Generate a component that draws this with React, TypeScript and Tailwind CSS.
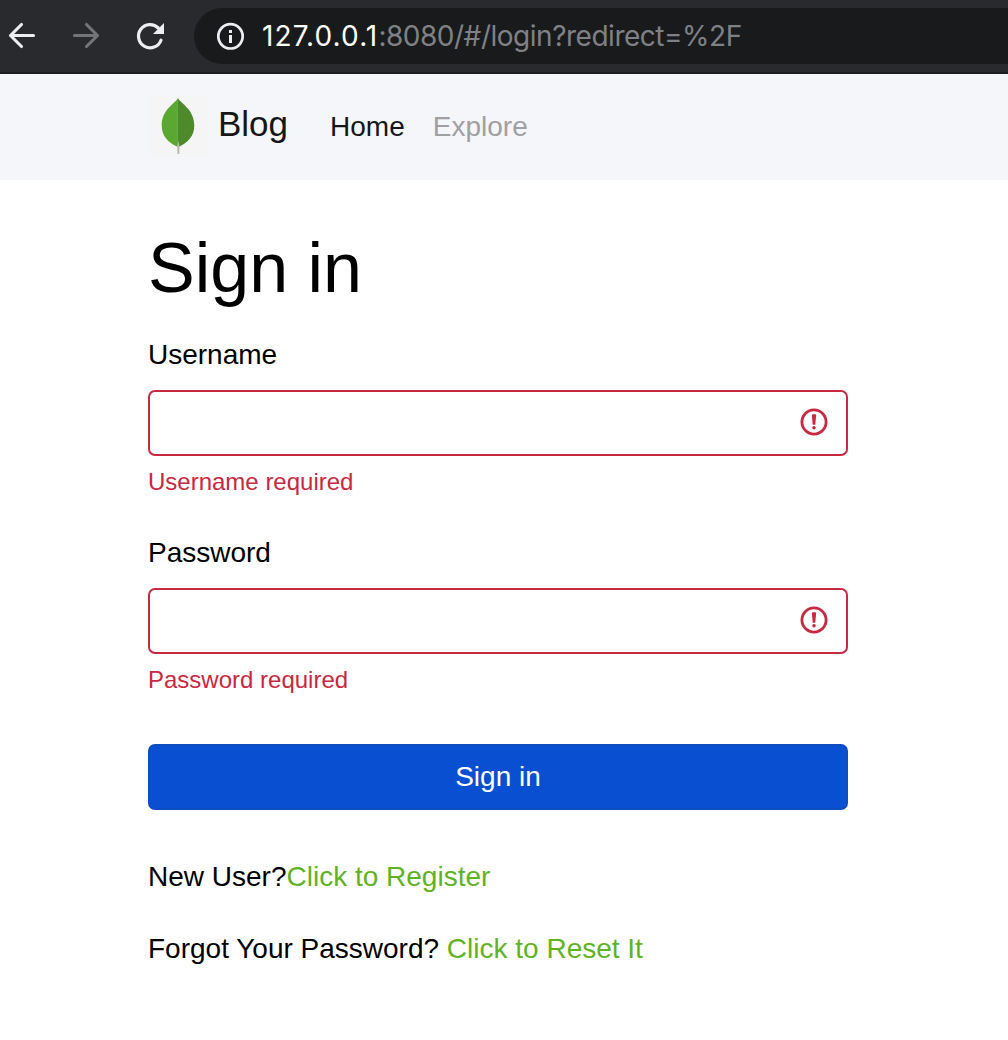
import React from "react";

function BrowserBar() {
  return (
    <div className="flex h-[74px] w-full items-start border-b-2 border-[#1d1e20] bg-[#292a2d] text-[#eceef2]">
      <svg className="mt-[18px] ml-1 h-9 w-9 shrink-0" viewBox="0 0 36 36" fill="none" stroke="currentColor" strokeWidth="3.1" strokeLinecap="round" strokeLinejoin="round">
        <path d="M29.5 17.5H6.500M17.500 6.500l-11 11 11 11" />
      </svg>
      <svg className="mt-[18px] ml-7 h-9 w-9 shrink-0 text-[#747578]" viewBox="0 0 36 36" fill="none" stroke="currentColor" strokeWidth="3.1" strokeLinecap="round" strokeLinejoin="round">
        <path d="M6.500 17.500h23M18.500 6.500l11 11-11 11" />
      </svg>
      <svg className="mt-[18px] ml-7 h-9 w-9 shrink-0" viewBox="0 0 36 36" fill="none">
        <path d="M26.300 10A11.600 11.600 0 1 0 29 22.200" stroke="currentColor" strokeWidth="3.200" strokeLinecap="round" />
        <path d="M32 5v11H21z" fill="currentColor" />
      </svg>
      <div className="mt-2 ml-[26px] flex h-14 flex-1 items-center overflow-hidden rounded-l-full bg-[#191a1c]">
        <svg className="ml-[22px] h-[30px] w-[30px] shrink-0" viewBox="0 0 30 30" fill="none">
          <circle cx="14.500" cy="15.300" r="12.200" stroke="currentColor" strokeWidth="2.700" />
          <path d="M13 9h3v3h-3zM13 14h3v8h-3z" fill="currentColor" />
        </svg>
        <span className="ml-4 font-[Inter,sans-serif] text-[28px] tracking-[-0.480px] whitespace-nowrap text-[#808184]">
          <span className="tracking-[1.100px] text-white">127.0.0.1</span>:8080/#/login?redirect=%2F
        </span>
      </div>
    </div>
  );
}

function LeafLogo() {
  return (
    <svg className="h-[60px] w-[60px] bg-[#f5f5f5]" viewBox="0 0 60 60">
      <path d="M29.900 2C28 7 13.700 13 13.700 29.500C13.700 40 20 46.500 29.900 51z" fill="#5aa832" />
      <path d="M29.900 2C32 7 46.300 13 46.300 29.500C46.300 40 40 46.500 30.500 51h-.6z" fill="#4c8a2b" />
      <path d="M29.200 50l1.100-5 1.200 5-.2 8h-1.800z" fill="#b8b8b2" />
    </svg>
  );
}

function Field({ label, message, type }: { label: string; message: string; type: string }) {
  return (
    <div className="mb-8 h-[166px]">
      <label className="block leading-[42px]">{label}</label>
      <div className="relative mt-3.5 h-[66px]">
        <input type={type} aria-label={label} className="block h-full w-full rounded-[7px] border-2 border-[#c82840] bg-white px-5 outline-none" />
        <svg className="pointer-events-none absolute top-[18px] right-5 h-7 w-7" viewBox="0 0 28 28" fill="none">
          <circle cx="14" cy="14" r="12.100" stroke="#c82840" strokeWidth="2.800" />
          <path d="M11.900 7.500Q11.900 6.200 13 6.200H15Q16.100 6.200 16.100 7.500L15.300 16.700H12.700z" fill="#c82840" />
          <circle cx="14" cy="19.800" r="1.800" fill="#c82840" />
        </svg>
      </div>
      <p className="mt-[7px] text-[24px] leading-[37px] text-[#c82840]">{message}</p>
    </div>
  );
}

export default function App() {
  return (
    <div className="h-[1040px] w-[1008px] overflow-hidden bg-white font-['Liberation_Sans',Arial,sans-serif] text-[28px] text-black">
      <BrowserBar />
      <nav className="flex h-[106px] items-start bg-[#f5f6f9] pl-[148px]">
        <div className="mt-[22px]"><LeafLogo /></div>
        <span className="mt-6 ml-2.5 text-[35px] leading-[52px] text-[#151618]">Blog</span>
        <span className="mt-8 ml-[42px] leading-[42px] text-[#151618]">Home</span>
        <span className="mt-8 ml-7 leading-[42px] text-[#a0a0a2]">Explore</span>
      </nav>
      <main className="ml-[148px] w-[700px] pt-[46px]">
        <h1 className="mb-6 text-[70px] leading-[84px]">Sign in</h1>
        <Field label="Username" message="Username required" type="text" />
        <Field label="Password" message="Password required" type="password" />
        <button className="mt-[46px] block h-[66px] w-full rounded-[7px] border-2 border-[#0d4dc0] bg-[#084fd1] leading-[42px] text-white">Sign in</button>
        <p className="mt-[46px] leading-[42px]">New User?<a className="text-[#5fb324]">Click to Register</a></p>
        <p className="mt-[30px] leading-[42px]">Forgot Your Password? <a className="text-[#5fb324]">Click to Reset It</a></p>
      </main>
    </div>
  );
}
